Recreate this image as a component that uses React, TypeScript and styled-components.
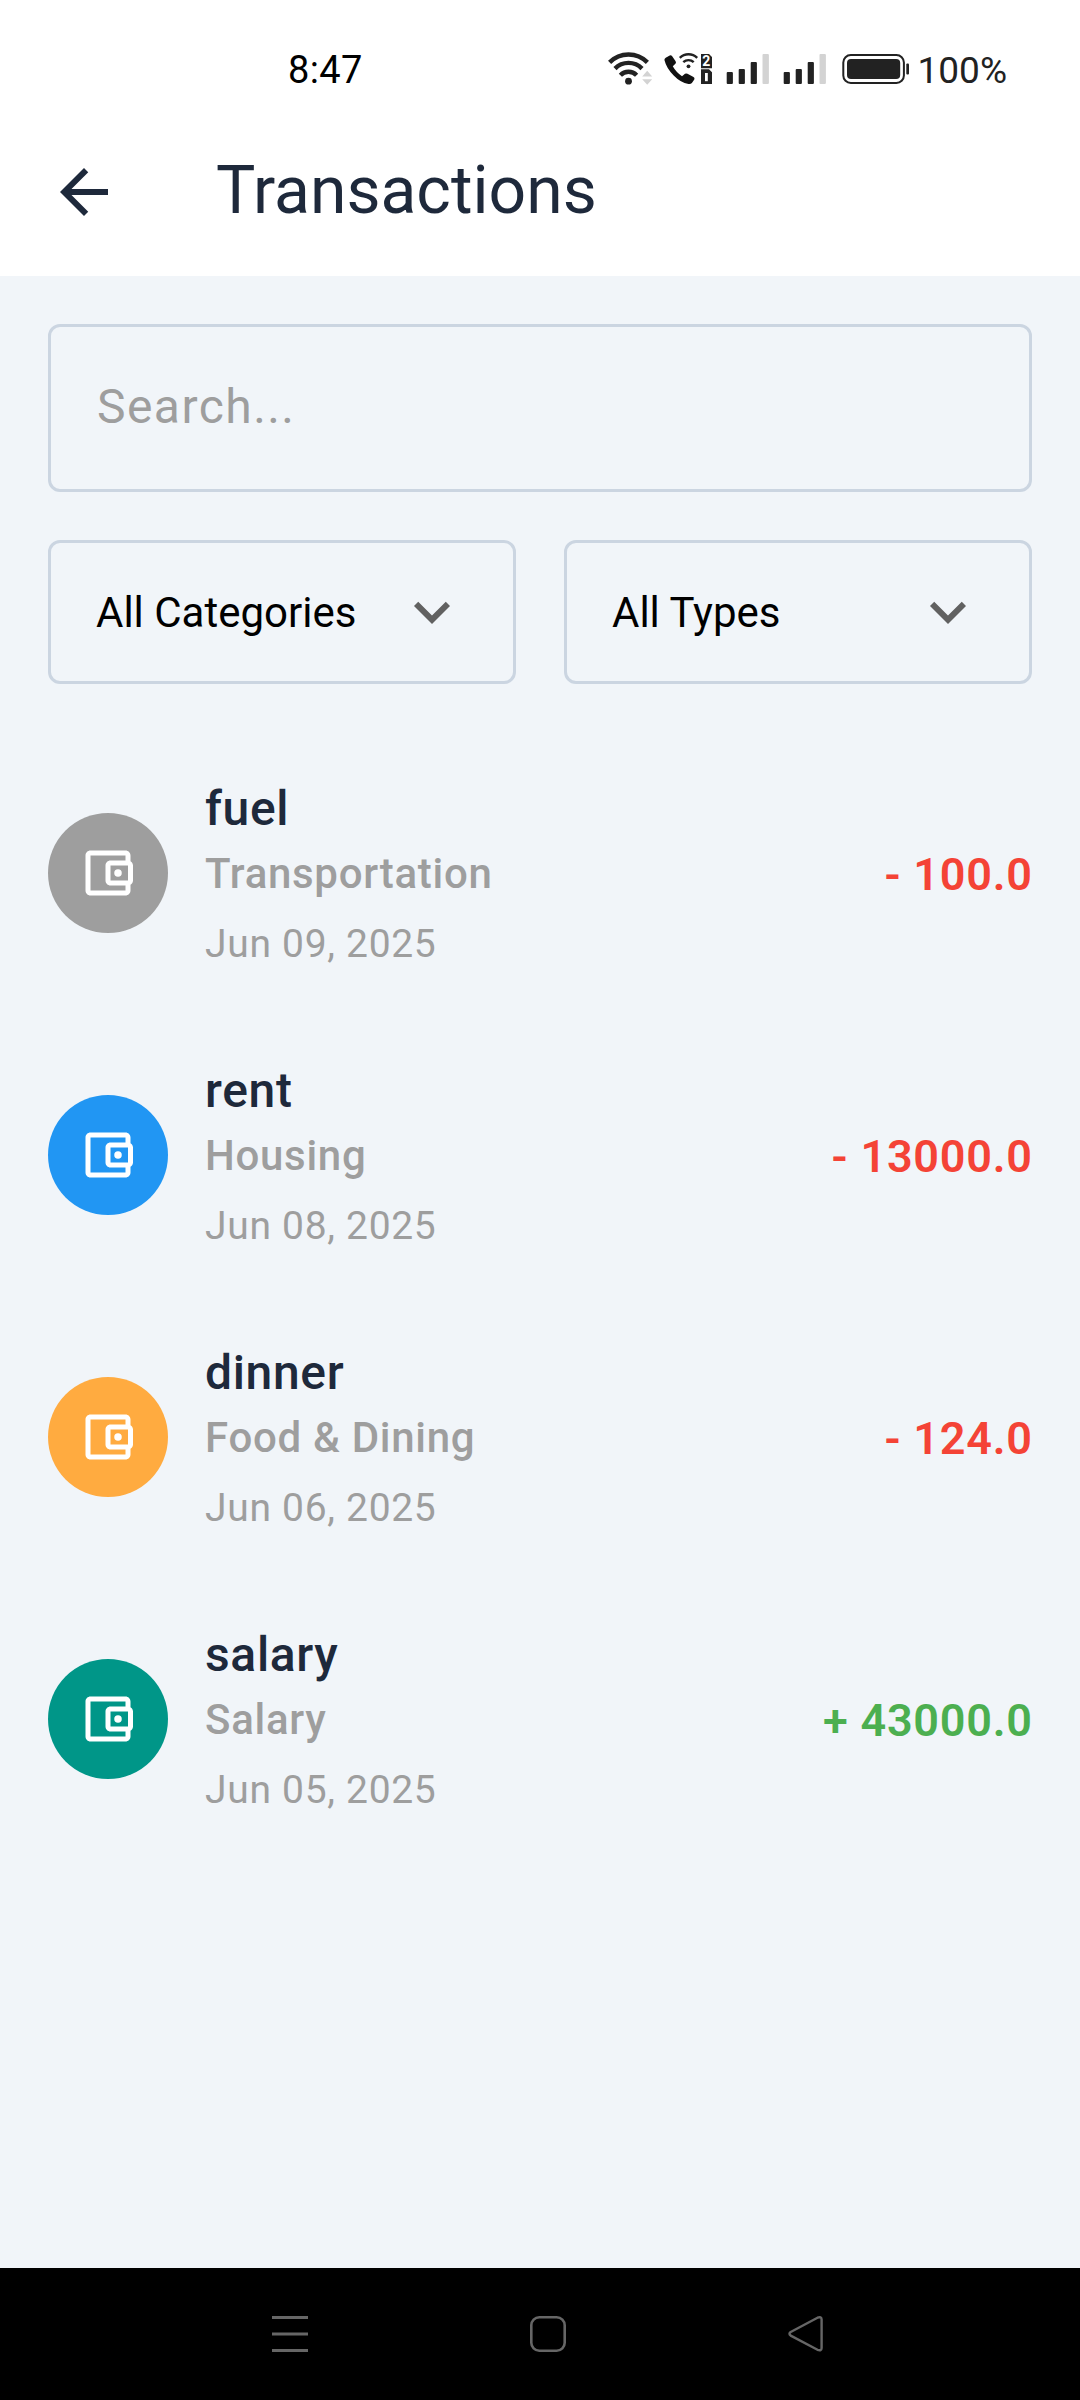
import React from 'react';
import styled, { createGlobalStyle } from 'styled-components';

const GlobalStyle = createGlobalStyle`
  *, *::before, *::after { box-sizing: border-box; }
  body { margin: 0; background: #f1f5f9; font-family: Roboto, "Noto Sans", sans-serif; }
`;

const Screen = styled.div`
  display: flex;
  flex-direction: column;
  width: 1080px;
  height: 2400px;
  background: #f1f5f9;
`;

const StatusBar = styled.div`
  display: flex;
  align-items: flex-end;
  justify-content: space-between;
  height: 108px;
  padding: 0 73px 0 288px;
  background: #fff;
`;

const Clock = styled.span`
  font-size: 38px;
  line-height: 44px;
  letter-spacing: 0.4px;
  margin-bottom: 16px;
  color: #000;
`;

const StatusIcons = styled.div`
  display: flex;
  align-items: flex-end;
`;

const StatusArt = styled.svg`
  display: block;
  margin-bottom: 20px;
`;

const SimLabel = styled.text`
  font-family: Roboto, sans-serif;
  font-size: 14px;
  font-weight: 700;
  fill: #fff;
  text-anchor: middle;
`;

const Battery = styled.span`
  font-size: 37px;
  line-height: 44px;
  margin: 0 0 15px 6px;
  color: #222;
`;

const AppBar = styled.header`
  display: flex;
  align-items: center;
  height: 168px;
  padding: 0 48px;
  gap: 96px;
  background: #fff;
  color: #1e293b;
`;

const Title = styled.h1`
  margin: 0 0 2px;
  font-size: 66px;
  line-height: 84px;
  font-weight: 400;
`;

const Content = styled.main`
  flex: 1;
  display: flex;
  flex-direction: column;
  gap: 48px;
  padding: 48px;
`;

const SearchBox = styled.div`
  display: flex;
  align-items: center;
  height: 168px;
  padding: 0 45px 2px 46px;
  border: 3px solid #cbd5e1;
  border-radius: 12px;
  font-size: 48px;
  line-height: 72px;
  letter-spacing: 1.45px;
  color: #9e9e9e;
`;

const Filters = styled.div`
  display: grid;
  grid-template-columns: 1fr 1fr;
  gap: 48px;
`;

const Select = styled.div`
  display: flex;
  align-items: center;
  justify-content: space-between;
  height: 144px;
  padding: 0 45px;
  border: 3px solid #cbd5e1;
  border-radius: 12px;
  font-size: 42px;
  line-height: 60px;
  color: #000;
`;

const SelectLabel = styled.span`
  padding-top: 2px;
`;

const Icon = styled.svg<{ $size: number }>`
  display: block;
  flex: none;
  width: ${p => p.$size}px;
  height: ${p => p.$size}px;
  fill: currentColor;
`;

const Chevron = styled(Icon)`
  color: #616161;
`;

const List = styled.ul`
  margin: 0;
  padding: 0;
  list-style: none;
`;

const Row = styled.li`
  display: flex;
  align-items: center;
  height: 282px;
  gap: 37px;
`;

const Avatar = styled.div<{ $color: string }>`
  display: grid;
  place-items: center;
  width: 120px;
  height: 120px;
  border-radius: 50%;
  background: ${p => p.$color};
  color: #fff;
`;

const Details = styled.div`
  flex: 1;
  display: flex;
  flex-direction: column;
  padding-bottom: 2px;
`;

const Name = styled.span`
  font-size: 48px;
  line-height: 72px;
  font-weight: 500;
  letter-spacing: 0.65px;
  color: #1e293b;
`;

const Category = styled.span`
  font-size: 42px;
  line-height: 58px;
  font-weight: 500;
  letter-spacing: 0.7px;
  color: #9e9e9e;
`;

const DateText = styled.span`
  margin-top: 13px;
  font-size: 39px;
  line-height: 56px;
  letter-spacing: 0.7px;
  color: #9e9e9e;
`;

const Amount = styled.span<{ $income: boolean }>`
  padding-top: 4px;
  margin-right: -0.75px;
  font-size: 45px;
  line-height: 60px;
  font-weight: 600;
  letter-spacing: 0.75px;
  color: ${p => (p.$income ? '#4caf50' : '#f44336')};
`;

const NavBar = styled.nav`
  height: 132px;
  background: #000;
  display: flex;
  align-items: center;
  justify-content: space-between;
  padding: 0 250px 0 266px;
`;

const NavIcon = styled.svg<{ $stroke?: number }>`
  display: block;
  fill: none;
  stroke: #666;
  stroke-width: ${p => p.$stroke ?? 3};
  stroke-linejoin: round;
`;

const transactions = [
  { name: 'fuel', category: 'Transportation', date: 'Jun 09, 2025', amount: '- 100.0', color: '#9e9e9e', income: false },
  { name: 'rent', category: 'Housing', date: 'Jun 08, 2025', amount: '- 13000.0', color: '#2196f3', income: false },
  { name: 'dinner', category: 'Food & Dining', date: 'Jun 06, 2025', amount: '- 124.0', color: '#ffab40', income: false },
  { name: 'salary', category: 'Salary', date: 'Jun 05, 2025', amount: '+ 43000.0', color: '#009688', income: true },
];

const SignalBars = ({ x }: { x: number }) => (
  <g fill="#222">
    <rect x={x} y="22" width="6.2" height="12" rx="1" />
    <rect x={x + 12} y="19" width="6.2" height="15" rx="1" />
    <rect x={x + 24} y="12" width="6.2" height="22" rx="1" />
    <rect x={x + 35.8} y="4" width="6.4" height="30" rx="1" fill="#d3d3d3" />
  </g>
);

const StatusIconStrip = () => (
  <StatusArt width="306" height="38" viewBox="606 50 306 38">
    <g fill="none" stroke="#222" strokeWidth="4.4">
      <path d="M609.6 62.4a26.5 26.5 0 0 1 37.8 0" />
      <path d="M615 68.6a18.8 18.8 0 0 1 27 0" />
      <path d="M620.4 75.2a11.2 11.2 0 0 1 16.200 0" />
    </g>
    <circle cx="628.5" cy="81.2" r="3.4" fill="#222" />
    <path d="M647.2 70.800l5 5.600h-10zM647.200 84.800l5-5.600h-10z" fill="#d3d3d3" />
    <path
      d="M664.5 60.200q-.5-1.500 1.200-2.500l4-2.300q1.400-.6 2.300.6l3.600 5.200q.9 1.500-.2 2.600l-2.600 2.400q3 5.600 9.200 10l3-2.400q1.200-.8 2.500 0l6 3.200q1.500 1 .8 2.400l-2.400 3.600q-1.200 1.300-3.400 1-8-1.200-14.800-8.400-7.400-7.800-9.200-15.400z"
      fill="#111"
    />
    <g fill="none" stroke="#222" strokeWidth="2.4">
      <path d="M679.8 57.800a12.600 12.600 0 0 1 17.400 0" />
      <path d="M683.300 62.200a7.600 7.600 0 0 1 10.400 0" />
    </g>
    <circle cx="688.500" cy="66.300" r="1.9" fill="#222" />
    <path d="M701 54h8l3 3v11.200h-11zM701 69.300h8l3 3V84h-11z" fill="#222" />
    <SimLabel x="706.3" y="66.200">2</SimLabel>
    <path d="M705 73h2.800v8.200H705z" fill="#fff" />
    <g transform="translate(0 50)">
      <SignalBars x={726.7} />
      <SignalBars x={783.7} />
    </g>
    <rect x="843.300" y="55" width="60.600" height="28" rx="7.500" fill="none" stroke="#222" strokeWidth="2" />
    <rect x="847" y="59" width="53.200" height="20" rx="4" fill="#222" />
    <rect x="906.300" y="63.500" width="2.700" height="11" rx="1" fill="#222" />
  </StatusArt>
);

export default function App() {
  return (
    <>
      <GlobalStyle />
      <Screen>
        <StatusBar>
          <Clock>8:47</Clock>
          <StatusIcons>
            <StatusIconStrip />
            <Battery>100%</Battery>
          </StatusIcons>
        </StatusBar>
        <AppBar>
          <Icon $size={72} viewBox="0 0 24 24">
            <path d="M20 11H7.830l5.590-5.590L12 4l-8 8 8 8 1.410-1.410L7.830 13H20v-2z" />
          </Icon>
          <Title>Transactions</Title>
        </AppBar>
        <Content>
          <SearchBox>Search...</SearchBox>
          <Filters>
            {['All Categories', 'All Types'].map(label => (
              <Select key={label}>
                <SelectLabel>{label}</SelectLabel>
                <Chevron $size={72} viewBox="0 0 24 24">
                  <path d="M7.410 8.590L12 13.170l4.590-4.580L18 10l-6 6-6-6 1.410-1.410z" />
                </Chevron>
              </Select>
            ))}
          </Filters>
          <List>
            {transactions.map(t => (
              <Row key={t.name}>
                <Avatar $color={t.color}>
                  <Icon $size={60} viewBox="0 0 24 24">
                    <path d="M21 7.280V5c0-1.100-.9-2-2-2H5c-1.110 0-2 .9-2 2v14c0 1.100.89 2 2 2h14c1.100 0 2-.9 2-2v-2.280c.59-.35 1-.98 1-1.720V9c0-.74-.41-1.370-1-1.720zM20 9v6h-7V9h7zM5 19V5h14v2h-6c-1.100 0-2 .9-2 2v6c0 1.100.9 2 2 2h6v2H5z" />
                    <circle cx="16" cy="12" r="1.5" />
                  </Icon>
                </Avatar>
                <Details>
                  <Name>{t.name}</Name>
                  <Category>{t.category}</Category>
                  <DateText>{t.date}</DateText>
                </Details>
                <Amount $income={t.income}>{t.amount}</Amount>
              </Row>
            ))}
          </List>
        </Content>
        <NavBar>
          <NavIcon width="48" height="48" viewBox="0 0 48 48">
            <path d="M6 7.500h36M6 24h36M6 40.500h36" />
          </NavIcon>
          <NavIcon $stroke={2.6} width="48" height="48" viewBox="0 0 48 48">
            <rect x="7.300" y="7.300" width="33.400" height="33.400" rx="8" />
          </NavIcon>
          <NavIcon $stroke={2.4} width="48" height="48" viewBox="0 0 48 48">
            <path d="M8.700 22L35.500 7.700Q39.600 6.300 39.600 9.500v28.500Q39.600 41.200 35.500 39.800L8.700 25.600Q6.200 23.800 8.700 22z" />
          </NavIcon>
        </NavBar>
      </Screen>
    </>
  );
}
